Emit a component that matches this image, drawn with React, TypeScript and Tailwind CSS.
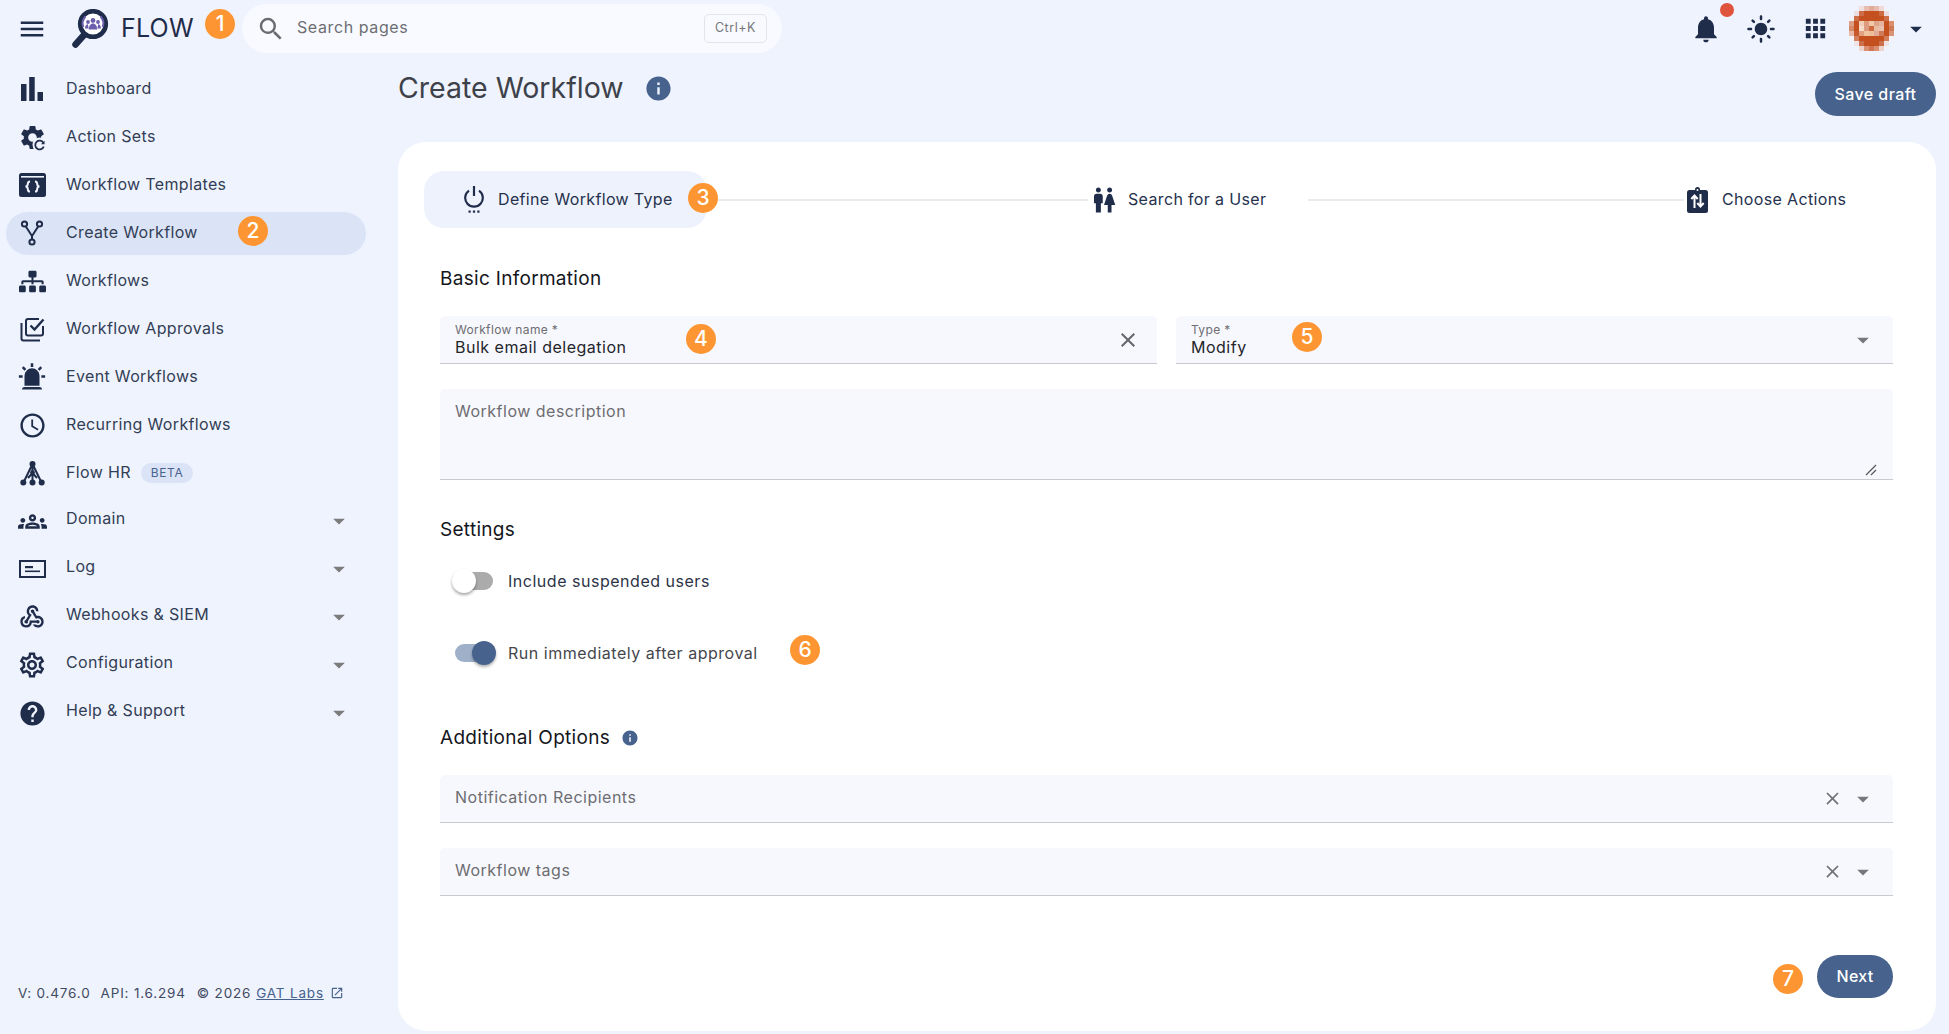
import type { ReactNode } from 'react';
import {
  MdApps,
  MdArrowDropDown,
  MdClose,
  MdHelp,
  MdInfo,
  MdLightMode,
  MdMenu,
  MdNotifications,
  MdOpenInNew,
  MdOutlineAccessTime,
  MdOutlineGroups,
  MdOutlineSettings,
  MdOutlineWebhook,
  MdSearch,
  MdWc,
} from 'react-icons/md';
import { FaSitemap } from 'react-icons/fa';

const GEAR =
  'M19.14 12.94c.04-.3.06-.61.06-.94 0-.32-.02-.64-.07-.94l2.03-1.58c.18-.14.23-.41.12-.61l-1.92-3.32c-.12-.22-.37-.29-.59-.22l-2.39.96c-.5-.38-1.03-.7-1.62-.94l-.36-2.54c-.04-.24-.24-.41-.48-.41h-3.84c-.24 0-.43.17-.47.41l-.36 2.54c-.59.24-1.13.57-1.62.94l-2.39-.96c-.22-.08-.47 0-.59.22L2.74 8.87c-.12.21-.08.47.12.61l2.03 1.58c-.05.3-.09.63-.09.94s.02.64.07.94l-2.03 1.58c-.18.14-.23.41-.12.61l1.92 3.32c.12.22.37.29.59.22l2.39-.96c.5.38 1.03.7 1.62.94l.36 2.54c.05.24.24.41.48.41h3.84c.24 0 .44-.17.47-.41l.36-2.54c.59-.24 1.13-.56 1.62-.94l2.39.96c.22.08.47 0 .59-.22l1.92-3.32c.12-.22.07-.47-.12-.61l-2.01-1.58zM12 15.6c-1.98 0-3.6-1.62-3.6-3.6s1.62-3.6 3.6-3.6 3.6 1.62 3.6 3.6-1.62 3.6-3.6 3.6z';

function BarsIcon() {
  return (
    <svg width="22" height="24" viewBox="0 0 22 24" fill="#1f2c4a">
      <rect x="0" y="7" width="5.5" height="17" />
      <rect x="8.2" y="0" width="5.5" height="24" />
      <rect x="16.5" y="15" width="5.5" height="9" />
    </svg>
  );
}

function ActionSetsIcon() {
  return (
    <svg width="29" height="29" viewBox="0 0 24 24" fill="#1f2c4a">
      <path d={GEAR} />
      <circle cx="18" cy="18" r="6" fill="#eff3fe" />
      <path d="M21 16.4a3.6 3.6 0 1 0 .3 3" fill="none" stroke="#1f2c4a" strokeWidth="1.5" />
      <path d="M22 14.6v3h-3z" />
    </svg>
  );
}

function TemplatesIcon() {
  return (
    <svg width="27" height="24" viewBox="0 0 27 24">
      <rect width="27" height="24" rx="2.5" fill="#1f2c4a" />
      <rect x="2" y="3" width="23" height="1.6" fill="#eff3fe" />
      <path
        d="M11 8.500c-2.200 0-2.200 1.200-2.200 2.600s-.6 2.200-2.200 2.400c1.600.2 2.200 1 2.200 2.400s0 2.600 2.200 2.600M16 8.500c2.200 0 2.200 1.200 2.200 2.600s.6 2.200 2.200 2.400c-1.600.2-2.200 1-2.200 2.400s0 2.600-2.200 2.600"
        fill="none"
        stroke="#eff3fe"
        strokeWidth="2"
      />
    </svg>
  );
}

function ForkIcon() {
  return (
    <svg width="24" height="26" viewBox="0 0 24 26" fill="none" stroke="#1f2c4a" strokeWidth="2">
      <circle cx="4.5" cy="4" r="2.6" />
      <circle cx="19.5" cy="4" r="2.6" />
      <circle cx="12" cy="22" r="2.6" />
      <path d="M5.8 6.5 12 16l6.2-9.5M12 16v3.4" />
    </svg>
  );
}

function ApprovalsIcon() {
  return (
    <svg width="25" height="25" viewBox="0 0 25 25" fill="none" stroke="#1f2c4a" strokeWidth="2">
      <path d="M1.500 6v15.500a2 2 0 0 0 2 2H20" />
      <path d="M19 2H8a2 2 0 0 0-2 2v12.500a2 2 0 0 0 2 2h13a2 2 0 0 0 2-2V9" />
      <path d="M10.500 8.500 14.500 12.500 23.500 2.500" strokeWidth="2.4" />
    </svg>
  );
}

function SirenIcon() {
  return (
    <svg width="30" height="30" viewBox="0 0 24 24" fill="#1f2c4a">
      <path d="M6,6.9L3.87,4.78L5.28,3.37L7.4,5.5L6,6.9M13,1V4H11V1H13M20.13,4.78L18,6.9L16.6,5.5L18.72,3.37L20.13,4.78M4.5,10.5V12.5H1.5V10.5H4.5M19.5,10.5H22.5V12.5H19.5V10.5M6,20H18A2,2 0 0,1 20,22H4A2,2 0 0,1 6,20M12,5A6,6 0 0,1 18,11V19H6V11A6,6 0 0,1 12,5Z" />
    </svg>
  );
}

function TreeIcon() {
  return (
    <svg width="25" height="25" viewBox="0 0 25 25" fill="#1f2c4a">
      <path d="M12.5 3 3.5 21.5M12.5 3l9 18.5M12.5 3v18.5M12.5 12l-4.5 5M12.5 12l4.5 5" stroke="#1f2c4a" strokeWidth="2" fill="none" />
      <circle cx="12.5" cy="3" r="3" />
      <circle cx="3.3" cy="21.5" r="3" />
      <circle cx="12.5" cy="21.5" r="3" />
      <circle cx="21.7" cy="21.5" r="3" />
      <circle cx="12.5" cy="11.5" r="2.4" />
    </svg>
  );
}

function LogIcon() {
  return (
    <svg width="27" height="18" viewBox="0 0 27 18" fill="none">
      <rect x="1" y="1" width="25" height="16" stroke="#1f2c4a" strokeWidth="2" />
      <rect x="6" y="6" width="8" height="2.2" fill="#1f2c4a" />
      <rect x="6" y="10.5" width="15" height="1.6" fill="#1f2c4a" />
    </svg>
  );
}

function PowerIcon() {
  return (
    <svg width="20" height="27" viewBox="0 0 20 27" fill="none" stroke="#1f2c4a" strokeWidth="2.2">
      <path d="M5 4.6a8.8 8.8 0 1 0 10 0M10 0v10" />
      <g fill="#1f2c4a" stroke="none">
        <rect x="4.5" y="24.5" width="2.2" height="2.2" />
        <rect x="8.9" y="24.5" width="2.2" height="2.2" />
        <rect x="13.3" y="24.5" width="2.2" height="2.2" />
      </g>
    </svg>
  );
}

function ClipboardIcon() {
  return (
    <svg width="21" height="26" viewBox="0 0 21 26">
      <rect x="0" y="3" width="21" height="23" rx="2.5" fill="#1f2c4a" />
      <circle cx="10.5" cy="2.5" r="2.5" fill="#1f2c4a" />
      <circle cx="10.5" cy="3" r="1" fill="#fff" />
      <path d="M7.5 21V9M4.3 12l3.2-3.6 3.2 3.6M13.5 7v12M10.3 16l3.2 3.6 3.2-3.6" fill="none" stroke="#fff" strokeWidth="2" />
    </svg>
  );
}

function Logo() {
  return (
    <svg width="40" height="40" viewBox="0 0 40 40" fill="none">
      <path d="M13 26 4.5 35.5" stroke="#1f2c4a" strokeWidth="6.5" strokeLinecap="round" />
      <circle cx="22" cy="15" r="12.8" fill="#fff" stroke="#1f2c4a" strokeWidth="4.6" />
      <g fill="#6b5fae">
        <circle cx="22" cy="11.5" r="2.4" />
        <circle cx="17" cy="13" r="1.9" />
        <circle cx="27" cy="13" r="1.9" />
        <path d="M17.800 20.500c0-3.600 1.800-6 4.200-6s4.200 2.400 4.200 6zM14 19.500c0-2.600 1.100-4.300 2.900-4.300l.7 4.300zM30 19.500c0-2.600-1.100-4.300-2.900-4.300l-.7 4.300z" />
      </g>
      <path d="M14.500 7.500a10 10 0 0 0-2.200 10.500M29.500 7.500a10 10 0 0 1 2.200 10.500" stroke="#6b5fae" strokeWidth="2" />
    </svg>
  );
}

const avatarPixels = [
  ['', '', '#f1dfe0', '#e7bfb0', '#e2ab97', '#e6bcae', '#f0dbd9', '', ''],
  ['', '#ecdde3', '#cc6c48', '#c4501f', '#c4501f', '#c4501f', '#cc6a44', '#ecdde3', ''],
  ['#f3f2f9', '#cb6f4b', '#c4501f', '#c4501f', '#c4501f', '#c4501f', '#c4501f', '#cb6f4b', '#f3f2f9'],
  ['#dc9f85', '#c4501f', '#f0d0b8', '#dd9b7c', '#f0c8a8', '#dfa58a', '#e5b4a0', '#c4501f', '#d98f70'],
  ['#d58a6a', '#c4501f', '#f3dcc8', '#dd9a80', '#cf6a40', '#e8bca0', '#e8c0b0', '#c4501f', '#cf7a55'],
  ['#e6b8a8', '#c8592c', '#e2a080', '#f0c4a0', '#eebd9a', '#e2aa98', '#cf7a58', '#c4501f', '#d99478'],
  ['#f3f2f9', '#d37f5e', '#c4501f', '#c4501f', '#c4501f', '#c4501f', '#c4501f', '#d37f5e', '#f3f2f9'],
  ['', '#f0e3e6', '#cc6f4b', '#c4501f', '#c4501f', '#c4501f', '#cc6f4b', '#f0e3e6', ''],
  ['', '', '#eed2cb', '#d98f70', '#d0734e', '#d98f70', '#eed2cb', '', ''],
];

function Avatar() {
  return (
    <svg width="45" height="45" viewBox="0 0 9 9" shapeRendering="crispEdges">
      {avatarPixels.map((row, y) =>
        row.map((c, x) => (c ? <rect key={`${x}-${y}`} x={x} y={y} width="1" height="1" fill={c} /> : null)),
      )}
    </svg>
  );
}

function Badge({ n, className }: { n: number; className: string }) {
  return (
    <div
      className={`absolute flex h-[30px] w-[30px] items-center justify-center rounded-full bg-[#fd9632] text-[21px] font-medium text-white ${className}`}
    >
      {n}
    </div>
  );
}

const navItems: { label: string; icon: ReactNode; active?: boolean; beta?: boolean; caret?: boolean }[] = [
  { label: 'Dashboard', icon: <BarsIcon /> },
  { label: 'Action Sets', icon: <ActionSetsIcon /> },
  { label: 'Workflow Templates', icon: <TemplatesIcon /> },
  { label: 'Create Workflow', icon: <ForkIcon />, active: true },
  { label: 'Workflows', icon: <FaSitemap size={27} color="#1f2c4a" /> },
  { label: 'Workflow Approvals', icon: <ApprovalsIcon /> },
  { label: 'Event Workflows', icon: <SirenIcon /> },
  { label: 'Recurring Workflows', icon: <MdOutlineAccessTime size={29} color="#1f2c4a" /> },
  { label: 'Flow HR', icon: <TreeIcon />, beta: true },
  { label: 'Domain', icon: <MdOutlineGroups size={29} color="#1f2c4a" />, caret: true },
  { label: 'Log', icon: <LogIcon />, caret: true },
  { label: 'Webhooks & SIEM', icon: <MdOutlineWebhook size={28} color="#1f2c4a" />, caret: true },
  { label: 'Configuration', icon: <MdOutlineSettings size={30} color="#1f2c4a" />, caret: true },
  { label: 'Help & Support', icon: <MdHelp size={29} color="#1f2c4a" />, caret: true },
];

function Sidebar() {
  return (
    <aside className="flex w-[398px] shrink-0 flex-col pt-[8px]">
      <nav className="flex flex-col">
        {navItems.map((item) => (
          <div
            key={item.label}
            className={`my-[2.5px] ml-[6px] flex h-[43px] w-[360px] items-center rounded-full ${item.active ? 'bg-[#dbe4f6]' : ''}`}
          >
            <span className="flex w-[52px] justify-center">{item.icon}</span>
            <span className={`ml-[8px] text-[16px] tracking-[0.34px] text-[#323e55] ${item.caret ? '-mt-[6px]' : '-mt-[2px]'}`}>
              {item.label}
            </span>
            {item.beta && (
              <span className="ml-[10px] rounded-full bg-[#dbe4f6] px-[10px] py-[2px] text-[12px] leading-[16px] tracking-[0.6px] text-[#46628d]">
                BETA
              </span>
            )}
            {item.caret && (
              <span className="ml-auto mr-[13px] text-[#7b7b7b]">
                <MdArrowDropDown size={28} />
              </span>
            )}
          </div>
        ))}
      </nav>
      <div className="mt-auto mb-[31px] ml-[18px] flex items-center text-[13.5px] tracking-[0.82px] text-[#3f4a60]">
        <span>V: 0.476.0</span>
        <span className="ml-[10px]">API: 1.6.294</span>
        <span className="ml-[11px]">© 2026</span>
        <span className="ml-[5px] text-[#46628d] underline">GAT Labs</span>
        <MdOpenInNew size={14} className="ml-[6px] text-[#46628d]" />
      </div>
    </aside>
  );
}

function TopBar() {
  return (
    <header className="flex h-[57px] shrink-0 items-center pl-[17px] pr-[19px]">
      <div className="flex w-[225px] items-center">
        <MdMenu size={30} color="#1f2c4a" />
        <span className="ml-[24px]">
          <Logo />
        </span>
        <span className="ml-[10px] text-[25px] font-normal tracking-[0.2px] text-[#1f2c4a]">FLOW</span>
      </div>
      <div className="flex h-[49px] w-[540px] items-center rounded-full bg-[#f8faff] pl-[14px] pr-[15px]">
        <MdSearch size={30} color="#6b6b6f" />
        <span className="ml-[11px] -mt-[3px] text-[16px] tracking-[0.6px] text-[#6e6e73]">Search pages</span>
        <span className="ml-auto flex h-[29px] w-[63px] items-center justify-center rounded-[5px] border border-[#e3e4e8] text-[12.5px] tracking-[0.55px] text-[#77777b]">
          Ctrl+K
        </span>
      </div>
      <div className="ml-auto flex items-center">
        <div className="relative">
          <MdNotifications size={32} color="#1f2c4a" />
          <span className="absolute left-[30px] top-[-10px] h-[14px] w-[14px] rounded-full bg-[#e0533d]" />
        </div>
        <MdLightMode size={30} color="#1f2c4a" className="ml-[24px]" />
        <MdApps size={29} color="#1f2c4a" className="ml-[25px]" />
        <span className="ml-[19px] flex">
          <Avatar />
        </span>
        <MdArrowDropDown size={28} color="#1f2c4a" className="ml-[8px]" />
      </div>
    </header>
  );
}

function Stepper() {
  return (
    <div className="-ml-[16px] flex h-[57px] items-center text-[16px] tracking-[0.35px] text-[#25314d]">
      <div className="flex h-[57px] w-[283px] items-center rounded-[20px] bg-[#eef2fc] pl-[40px]">
        <PowerIcon />
        <span className="ml-[14px] -mt-[2px]">Define Workflow Type</span>
      </div>
      <div className="ml-[11px] h-[2px] w-[370px] bg-[#ebebeb]" />
      <span className="ml-[1px] flex">
        <MdWc size={30} color="#1f2c4a" />
      </span>
      <span className="ml-[9px] -mt-[2px] w-[141px]">Search for a User</span>
      <div className="ml-[39px] h-[2px] w-[376px] bg-[#ebebeb]" />
      <span className="ml-[3px] flex">
        <ClipboardIcon />
      </span>
      <span className="ml-[14px] -mt-[2px]">Choose Actions</span>
    </div>
  );
}

function Heading({ children, className }: { children: ReactNode; className: string }) {
  return <h2 className={`flex h-[28px] items-center text-[19px] tracking-[0.3px] text-[#14161c] ${className}`}>{children}</h2>;
}

function FilledField({ label, value, close, caret }: { label: string; value: string; close?: boolean; caret?: boolean }) {
  return (
    <div className="flex h-[48px] items-center rounded-t-[5px] border-b border-[#c9c9cf] bg-[#f7f8fd]">
      <div className="self-start pl-[15px] pt-[7px]">
        <div className="text-[12px] leading-[14px] tracking-[0.35px] text-[#6d6d72]">{label}</div>
        <div className="text-[16px] leading-[20px] tracking-[0.5px] text-[#23252b]">{value}</div>
      </div>
      {close && <MdClose size={24} color="#66666a" className="ml-auto mr-[17px]" />}
      {caret && <MdArrowDropDown size={28} color="#77777b" className="ml-auto mr-[16px]" />}
    </div>
  );
}

function PickerField({ label, className }: { label: string; className: string }) {
  return (
    <div className={`flex h-[48px] items-center rounded-t-[5px] border-b border-[#c9c9cf] bg-[#f7f8fd] pl-[15px] pr-[16px] ${className}`}>
      <span className="-mt-[4px] text-[16px] tracking-[0.5px] text-[#6d6d72]">{label}</span>
      <MdClose size={21} color="#727276" className="ml-auto" />
      <MdArrowDropDown size={28} color="#77777b" className="ml-[6px]" />
    </div>
  );
}

function Toggle({ on, label }: { on?: boolean; label: string }) {
  return (
    <div className="flex h-[40px] items-center pl-[12px]">
      <div className="relative h-[24px] w-[44px]">
        {on ? (
          <>
            <div className="absolute left-[3px] top-[3px] h-[18px] w-[37px] rounded-full bg-[#9fb0c9]" />
            <div className="absolute left-[20px] top-0 h-[24px] w-[24px] rounded-full bg-[#46628d] shadow-[0_2px_3px_rgba(0,0,0,0.3)]" />
          </>
        ) : (
          <>
            <div className="absolute left-[5px] top-[3px] h-[18px] w-[36px] rounded-full bg-[#ababab]" />
            <div className="absolute left-0 top-0 h-[24px] w-[24px] rounded-full bg-white shadow-[0_2px_3px_rgba(0,0,0,0.35)]" />
          </>
        )}
      </div>
      <span className={`ml-[12px] text-[16px] tracking-[0.52px] ${on ? 'text-[#45474d]' : 'text-[#2c3346]'}`}>{label}</span>
    </div>
  );
}

function Card() {
  return (
    <section className="mb-[3px] flex-1 rounded-[28px] bg-white pl-[42px] pr-[43px] pt-[29px]">
      <Stepper />
      <Heading className="mt-[37px]">Basic Information</Heading>
      <div className="mt-[23px] grid grid-cols-2 gap-[19px]">
        <FilledField label="Workflow name *" value="Bulk email delegation" close />
        <FilledField label="Type *" value="Modify" caret />
      </div>
      <div className="relative mt-[25px] h-[91px] rounded-t-[5px] border-b border-[#c9c9cf] bg-[#f7f8fd] pl-[15px] pt-[10px] text-[16px] tracking-[0.5px] text-[#6d6d72]">
        Workflow description
        <svg width="12" height="12" viewBox="0 0 12 12" className="absolute bottom-[3px] right-[16px]" stroke="#55555a" strokeWidth="1.2">
          <path d="M1 11 11 1M6 11l5-5" />
        </svg>
      </div>
      <Heading className="mt-[36px]">Settings</Heading>
      <div className="mt-[17px]">
        <Toggle label="Include suspended users" />
      </div>
      <div className="mt-[32px]">
        <Toggle on label="Run immediately after approval" />
      </div>
      <Heading className="mt-[51px]">
        Additional Options
        <MdInfo size={18} color="#46628d" className="ml-[11px]" />
      </Heading>
      <PickerField label="Notification Recipients" className="mt-[23px]" />
      <PickerField label="Workflow tags" className="mt-[25px]" />
      <div className="mt-[59px] flex justify-end">
        <button className="h-[43px] w-[76px] rounded-full bg-[#46628d] pb-[2px] text-[16px] font-medium tracking-[0.3px] text-white">Next</button>
      </div>
    </section>
  );
}

export default function App() {
  return (
    <div className="relative flex h-screen flex-col overflow-hidden bg-[#eff3fe] [font-family:Inter,sans-serif]">
      <TopBar />
      <div className="flex min-h-0 flex-1">
        <Sidebar />
        <main className="flex min-w-0 flex-1 flex-col pr-[13px]">
          <div className="flex h-[85px] shrink-0 items-start justify-between">
            <div className="mt-[13px] flex h-[36px] items-center">
              <h1 className="text-[28.5px] font-normal text-[#3d4149]">Create Workflow</h1>
              <MdInfo size={29} color="#46628d" className="ml-[20px]" />
            </div>
            <button className="mt-[15px] h-[44px] w-[121px] rounded-full bg-[#46628d] text-[16px] font-medium tracking-[0.4px] text-white">Save draft</button>
          </div>
          <Card />
        </main>
      </div>
      <Badge n={1} className="left-[205px] top-[9px]" />
      <Badge n={2} className="left-[238px] top-[216px]" />
      <Badge n={3} className="left-[688px] top-[183px]" />
      <Badge n={4} className="left-[686px] top-[324px]" />
      <Badge n={5} className="left-[1292px] top-[322px]" />
      <Badge n={6} className="left-[790px] top-[635px]" />
      <Badge n={7} className="left-[1773px] top-[964px]" />
    </div>
  );
}
